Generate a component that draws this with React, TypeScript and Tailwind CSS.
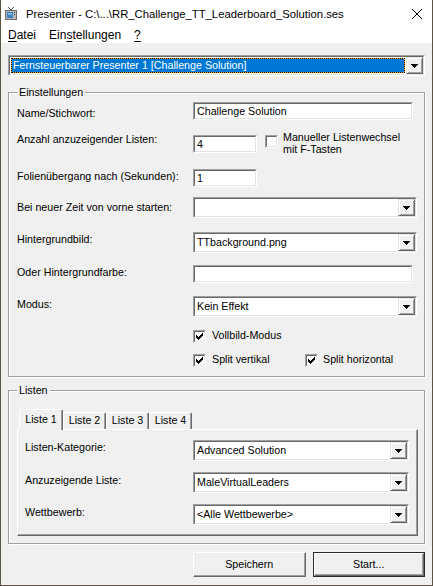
import React from "react";

const Arrow = () => (
  <svg width="7" height="4" viewBox="0 0 7 4" shapeRendering="crispEdges">
    <path d="M0 0h7v1H0zM1 1h5v1H1zM2 2h3v1H2zM3 3h1v1H3z" fill="#000" />
  </svg>
);

const DropBtn = () => (
  <div className="w-[17px] h-full shrink-0 flex items-center justify-center bg-[#f0f0f0] border border-t-[#e3e3e3] border-l-[#e3e3e3] border-r-[#696969] border-b-[#696969] shadow-[inset_1px_1px_0_#fff,inset_-1px_-1px_0_#a0a0a0]">
    <Arrow />
  </div>
);

function Combo({ w, value }: { w: string; value: string }) {
  return (
    <div className={`${w} h-[21px] shrink-0 border border-t-[#a0a0a0] border-l-[#a0a0a0] border-r-white border-b-white`}>
      <div className="h-full flex border border-t-[#696969] border-l-[#696969] border-r-[#e3e3e3] border-b-[#e3e3e3] bg-white">
        <div className="flex-1 pl-[2px] leading-[17px] whitespace-nowrap overflow-hidden">{value}</div>
        <DropBtn />
      </div>
    </div>
  );
}

function TextInput({ w, value }: { w: string; value: string }) {
  return (
    <div className={`${w} h-[18px] shrink-0 border border-t-[#a0a0a0] border-l-[#a0a0a0] border-r-white border-b-white`}>
      <div className="h-full border border-t-[#696969] border-l-[#696969] border-r-[#e3e3e3] border-b-[#e3e3e3] bg-white pl-[2px] leading-[14px] whitespace-nowrap overflow-hidden">
        {value}
      </div>
    </div>
  );
}

function Check({ checked }: { checked: boolean }) {
  return (
    <div className="w-[13px] h-[13px] shrink-0 border border-t-[#a0a0a0] border-l-[#a0a0a0] border-r-white border-b-white">
      <div className="w-full h-full border border-t-[#696969] border-l-[#696969] border-r-[#e3e3e3] border-b-[#e3e3e3] bg-white flex items-center justify-center">
        {checked && (
          <svg width="7" height="7" viewBox="0 0 7 7" shapeRendering="crispEdges">
            <path
              d="M6 0h1v1H6zM5 1h2v1H5zM0 2h1v1H0zM4 2h3v1H4zM0 3h2v1H0zM3 3h3v1H3zM0 4h5v1H0zM1 5h3v1H1zM2 6h1v1H2z"
              fill="#000"
            />
          </svg>
        )}
      </div>
    </div>
  );
}

const TvIcon = () => (
  <svg width="12" height="13" viewBox="0 0 12 13" shapeRendering="crispEdges">
    <path d="M3 0h1v1H3zM4 1h1v1H4zM5 2h1v1H5zM8 0h1v1H8zM7 1h1v1H7zM6 2h1v1H6z" fill="#555" />
    <rect x="0" y="3" width="12" height="10" fill="#6d6d6d" />
    <rect x="1" y="4" width="10" height="8" fill="#b8b8b8" />
    <rect x="2" y="5" width="6" height="6" fill="#3d7fc4" />
    <rect x="3" y="6" width="4" height="2" fill="#7fb4e6" />
    <rect x="9" y="5" width="1" height="1" fill="#444" />
    <rect x="9" y="7" width="1" height="1" fill="#444" />
  </svg>
);

const TAB =
  "bg-[#f0f0f0] border-t border-l border-r border-t-white border-l-white border-r-[#696969] shadow-[inset_-1px_0_0_#a0a0a0] rounded-t-[2px] flex items-start justify-center leading-[13px]";

export default function App() {
  return (
    <div className="w-[433px] h-[586px] flex flex-col bg-[#f0f0f0] border-x border-b border-[#5b5548] font-['Liberation_Sans',Arial,sans-serif] text-[10.7px] text-black overflow-hidden">
      {/* Title bar */}
      <div className="h-[27px] shrink-0 bg-white flex items-center">
        <div className="ml-[4px] flex items-center">
          <TvIcon />
        </div>
        <div className="ml-[9px] text-[11.3px] leading-[16px] whitespace-nowrap">
          Presenter - C:\...\RR_Challenge_TT_Leaderboard_Solution.ses
        </div>
        <div className="ml-auto mr-[10px] flex items-center">
          <svg width="10" height="10" viewBox="0 0 10 10">
            <path d="M0 0L10 10M10 0L0 10" stroke="#000" strokeWidth="1" />
          </svg>
        </div>
      </div>

      {/* Menu bar */}
      <div className="h-[16px] shrink-0 bg-white flex items-center pl-[7px] text-[12px] leading-[16px]">
        <span>
          <span className="underline underline-offset-2">D</span>atei
        </span>
        <span className="ml-[13px]">
          Ein<span className="underline underline-offset-2">s</span>tellungen
        </span>
        <span className="ml-[13px] underline underline-offset-2">?</span>
      </div>

      {/* Body */}
      <div className="flex-1 flex flex-col px-[7px] pt-[12px]">
        {/* Top selector */}
        <div className="w-[417px] h-[21px] shrink-0 border border-t-[#a0a0a0] border-l-[#a0a0a0] border-r-white border-b-white">
          <div className="h-full flex border border-t-[#696969] border-l-[#696969] border-r-[#e3e3e3] border-b-[#e3e3e3] bg-white">
            <div className="flex-1 p-[1px] flex">
              <div className="flex-1 bg-[#ff9f1a]">
                <div className="h-full bg-[#0078d7] bg-clip-padding border border-dotted border-black text-white pl-[1px] leading-[13px] whitespace-nowrap">
                  Fernsteuerbarer Presenter 1 [Challenge Solution]
                </div>
              </div>
            </div>
            <DropBtn />
          </div>
        </div>

        {/* Einstellungen */}
        <fieldset className="mt-[10px] pb-[9px] border border-[#a0a0a0] shadow-[inset_1px_1px_0_#fff,1px_1px_0_#fff]">
          <legend className="ml-[8px] px-[2px] leading-[13px] bg-[#f0f0f0]">Einstellungen</legend>

          <div className="flex items-start mt-[3px]">
            <div className="w-[184px] shrink-0 pl-[8px] mt-[5px] leading-[13px]">Name/Stichwort:</div>
            <TextInput w="w-[220px]" value="Challenge Solution" />
          </div>

          <div className="flex items-start mt-[15px]">
            <div className="w-[184px] shrink-0 pl-[8px] -mt-[2px] leading-[13px]">Anzahl anzuzeigender Listen:</div>
            <TextInput w="w-[64px]" value="4" />
            <div className="ml-[8px]">
              <Check checked={false} />
            </div>
            <div className="ml-[5px] -mt-[4px] leading-[12px]">
              Manueller Listenwechsel
              <br />
              mit F-Tasten
            </div>
          </div>

          <div className="flex items-start mt-[14px]">
            <div className="w-[184px] shrink-0 pl-[8px] mt-[1px] leading-[13px]">Folienübergang nach (Sekunden):</div>
            <TextInput w="w-[64px]" value="1" />
          </div>

          <div className="flex items-start mt-[10px]">
            <div className="w-[184px] shrink-0 pl-[8px] mt-[4px] leading-[13px]">Bei neuer Zeit von vorne starten:</div>
            <Combo w="w-[224px]" value="" />
          </div>

          <div className="flex items-start mt-[14px]">
            <div className="w-[184px] shrink-0 pl-[8px] mt-[1px] leading-[13px]">Hintergrundbild:</div>
            <Combo w="w-[224px]" value="TTbackground.png" />
          </div>

          <div className="flex items-start mt-[12px]">
            <div className="w-[184px] shrink-0 pl-[8px] mt-[1px] leading-[13px]">Oder Hintergrundfarbe:</div>
            <TextInput w="w-[220px]" value="" />
          </div>

          <div className="flex items-start mt-[13px]">
            <div className="w-[184px] shrink-0 pl-[8px] mt-[2px] leading-[13px]">Modus:</div>
            <Combo w="w-[224px]" value="Kein Effekt" />
          </div>

          <div className="flex items-start mt-[13px] pl-[184px]">
            <Check checked={true} />
            <div className="ml-[6px] -mt-[1px] leading-[13px]">Vollbild-Modus</div>
          </div>

          <div className="flex items-start mt-[11px] pl-[184px]">
            <div className="w-[112px] flex items-start">
              <Check checked={true} />
              <div className="ml-[6px] -mt-[1px] leading-[13px]">Split vertikal</div>
            </div>
            <Check checked={true} />
            <div className="ml-[5px] -mt-[1px] leading-[13px]">Split horizontal</div>
          </div>
        </fieldset>

        {/* Listen */}
        <fieldset className="mt-[7px] pb-[7px] border border-[#a0a0a0] shadow-[inset_1px_1px_0_#fff,1px_1px_0_#fff]">
          <legend className="ml-[8px] px-[2px] leading-[13px] bg-[#f0f0f0]">Listen</legend>

          <div className="mt-[12px] ml-[10px] flex items-end">
            <div className={`relative z-10 -mb-[1px] h-[21px] w-[44px] pt-[3px] ${TAB}`}>Liste 1</div>
            <div className={`h-[17px] w-[43px] pt-[1px] ${TAB}`}>Liste 2</div>
            <div className={`h-[17px] w-[43px] pt-[1px] ${TAB}`}>Liste 3</div>
            <div className={`h-[17px] w-[43px] pt-[1px] ${TAB}`}>Liste 4</div>
          </div>

          <div className="ml-[8px] mr-[6px] pb-[10px] border border-t-white border-l-white border-r-[#696969] border-b-[#696969] shadow-[inset_-1px_-1px_0_#a0a0a0]">
            <div className="flex items-start mt-[10px]">
              <div className="w-[175px] shrink-0 pl-[7px] mt-[1px] leading-[13px]">Listen-Kategorie:</div>
              <Combo w="w-[216px]" value="Advanced Solution" />
            </div>
            <div className="flex items-start mt-[11px]">
              <div className="w-[175px] shrink-0 pl-[7px] mt-[2px] leading-[13px]">Anzuzeigende Liste:</div>
              <Combo w="w-[216px]" value="MaleVirtualLeaders" />
            </div>
            <div className="flex items-start mt-[11px]">
              <div className="w-[175px] shrink-0 pl-[7px] mt-[2px] leading-[13px]">Wettbewerb:</div>
              <Combo w="w-[216px]" value="<Alle Wettbewerbe>" />
            </div>
          </div>
        </fieldset>

        {/* Buttons */}
        <div className="mt-[8px] ml-[185px] flex gap-[7px]">
          <div className="w-[113px] h-[25px] flex items-center justify-center bg-[#f0f0f0] border border-t-white border-l-white border-r-[#696969] border-b-[#696969] shadow-[inset_-1px_-1px_0_#a0a0a0]">
            Speichern
          </div>
          <div className="w-[113px] h-[25px] border border-[#2a2a2a]">
            <div className="h-full flex items-center justify-center bg-[#f0f0f0] border border-t-white border-l-white border-r-[#696969] border-b-[#696969] shadow-[inset_-1px_-1px_0_#a0a0a0]">
              Start...
            </div>
          </div>
        </div>
      </div>
    </div>
  );
}
